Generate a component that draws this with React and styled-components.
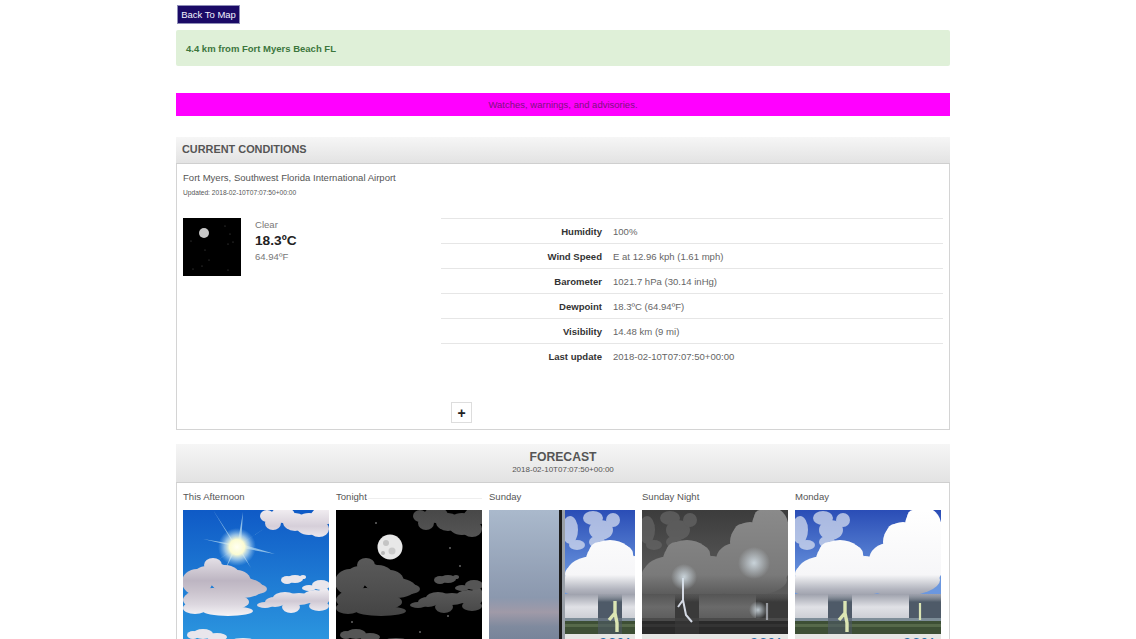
import React from "react";
import styled, { createGlobalStyle } from "styled-components";

const Global = createGlobalStyle`
  html, body { margin: 0; padding: 0; background: #fff; }
  body { font-family: "Liberation Sans", Arial, sans-serif; color: #666; }
  #root { height: 639px; overflow: hidden; }
`;

const Page = styled.div`
  width: 774px;
  margin-left: 176px;
  padding-top: 5px;
`;
const BackButton = styled.button`
  display: block;
  width: 63px;
  height: 19px;
  margin-left: 1px;
  padding: 0;
  background: #1a0a66;
  border: 1px solid #8f8fb8;
  color: #f2f2ff;
  font: 9.5px "Liberation Sans", Arial, sans-serif;
`;
const Alert = styled.div`
  display: flex;
  align-items: center;
  height: 36px;
  margin-top: 6px;
  padding-left: 10px;
  background: #dff0d8;
  border-radius: 2px;
  color: #3c763d;
  font-size: 9.5px;
  font-weight: bold;
`;
const Advisory = styled.div`
  display: flex;
  align-items: center;
  justify-content: center;
  height: 23px;
  margin-top: 27px;
  background: #ff00ff;
  color: #80107f;
  font-size: 9.5px;
`;
const Panel = styled.section`
  border: solid #d4d4d4;
  border-width: 0 1px 1px;
  margin-top: ${p => p.$top}px;
  box-sizing: border-box;
`;
const PanelHeader = styled.header`
  height: ${p => p.$h}px;
  margin: 0 -1px;
  background: linear-gradient(#f6f6f6, #e3e3e3);
  border-bottom: 1px solid #cfcfcf;
  box-sizing: border-box;
  color: #555;
  font-weight: bold;
`;
const CurrentTitle = styled(PanelHeader)`
  display: flex;
  align-items: center;
  padding: 0 0 2px 6px;
  font-size: 10.9px;
`;
const ForecastTitle = styled(PanelHeader)`
  display: flex;
  flex-direction: column;
  align-items: center;
  padding-top: 6px;
  font-size: 12.2px;
  line-height: 15px;
`;
const ForecastDate = styled.span`
  font-size: 8px;
  font-weight: normal;
  line-height: 9px;
  color: #555;
`;
const CurrentBody = styled.div`
  height: 265px;
  padding: 7px 5px 0 6px;
  box-sizing: border-box;
`;
const Station = styled.div`
  font-size: 9.55px;
  line-height: 13px;
  color: #555;
`;
const Updated = styled.div`
  margin-top: 4px;
  font-size: 6.65px;
  line-height: 9px;
  color: #555;
`;
const Conditions = styled.div`
  display: grid;
  grid-template-columns: 258px 502px;
  margin-top: 21px;
`;
const Now = styled.div`
  display: flex;
  gap: 14px;
`;
const NowText = styled.div`
  display: flex;
  flex-direction: column;
  font-size: 9.55px;
  line-height: 14px;
  color: #777;
`;
const Temp = styled.div`
  font-size: 13.7px;
  font-weight: bold;
  line-height: 18px;
  color: #222;
`;
const Row = styled.div`
  display: grid;
  grid-template-columns: 161px 1fr;
  column-gap: 11px;
  align-items: center;
  height: 25px;
  border-top: 1px solid #e6e6e6;
  box-sizing: border-box;
  font-size: 9.55px;
`;
const Label = styled.span`
  text-align: right;
  font-weight: bold;
  color: #333;
`;
const Value = styled.span`
  color: #666;
`;
const Toggle = styled.button`
  display: flex;
  align-items: center;
  justify-content: center;
  width: 21px;
  height: 21px;
  margin: 34px 0 0 10px;
  padding: 0;
  background: #fff;
  border: 1px solid #ddd;
  color: #222;
  font: bold 14px "Liberation Sans", Arial, sans-serif;
`;
const Days = styled.div`
  display: grid;
  grid-template-columns: repeat(5, 146px);
  column-gap: 7px;
  padding: 7px 0 0 6px;
`;
const Day = styled.div`
  display: flex;
  flex-direction: column;
  gap: 7px;
`;
const DayName = styled.div`
  display: flex;
  align-items: center;
  gap: 1px;
  height: 13px;
  font-size: 9.55px;
  color: #555;
`;
const Rule = styled.span`
  flex: 1;
  margin-top: 3px;
  border-top: 1px solid #eee;
`;
const Picture = styled.svg`
  display: block;
  width: 146px;
  height: 146px;
`;
const Thumb = styled.svg`
  display: block;
  width: 58px;
  height: 58px;
`;
const StripText = styled.text`
  fill: #2a6fa8;
  font: bold 17px "Liberation Sans", Arial, sans-serif;
`;

const Blobs = ({ parts, fill, opacity }) => (
  <g fill={fill} opacity={opacity}>
    {parts.map(([x, y, rx, ry], i) => <ellipse key={i} cx={x} cy={y} rx={rx} ry={ry} />)}
  </g>
);

const Fade = ({ id, y1, y2, stops }) => (
  <linearGradient id={id} gradientUnits="userSpaceOnUse" x1="0" y1={y1} x2="0" y2={y2}>
    {stops.map(([o, c, a]) => <stop key={o} offset={o} stopColor={c} stopOpacity={a ?? 1} />)}
  </linearGradient>
);

const topCloud = [[84, 6, 7, 6], [90, 13, 8, 7], [100, 5, 12, 8], [112, 12, 12, 9], [126, 14, 14, 11], [136, 19, 10, 8], [140, 6, 12, 9]];
const bigCloud = [[14, 72, 15, 13], [30, 55, 9, 7], [24, 66, 14, 10], [36, 62, 10, 8], [42, 68, 16, 13], [54, 72, 14, 12], [60, 78, 20, 10], [74, 79, 10, 5],
  [30, 90, 30, 12], [50, 92, 16, 7], [45, 101, 25, 5], [12, 98, 12, 6]];
const rightCloud = [[82, 95, 8, 3], [92, 92, 10, 5], [102, 88, 12, 6], [116, 89, 14, 6], [132, 87, 12, 7], [141, 86, 6, 9], [108, 97, 9, 6], [136, 96, 10, 5]];
const smallClouds = [[104, 70, 6, 4], [112, 69, 8, 4], [120, 67, 3, 2], [126, 78, 7, 3], [138, 75, 9, 5]];
const lowCloud = [[10, 125, 6, 4], [20, 124, 10, 5], [34, 127, 10, 4], [60, 130, 10, 2]];

const CloudLayer = ({ prefix, stops }) => (
  <>
    <defs>
      <Fade id={`${prefix}A`} y1="0" y2="27" stops={stops.top} />
      <Fade id={`${prefix}B`} y1="47" y2="106" stops={stops.big} />
      <Fade id={`${prefix}C`} y1="78" y2="104" stops={stops.right} />
    </defs>
    <Blobs parts={topCloud} fill={`url(#${prefix}A)`} />
    <Blobs parts={bigCloud} fill={`url(#${prefix}B)`} />
    <Blobs parts={rightCloud} fill={`url(#${prefix}C)`} />
    <Blobs parts={smallClouds} fill={stops.small} />
    <Blobs parts={lowCloud} fill={stops.small} />
  </>
);

const sunClouds = {
  top: [[0, "#f0ecf0"], [0.6, "#d6cfd9"], [1, "#ece8ee"]],
  big: [[0, "#e6e2e8"], [0.4, "#bdb5c2"], [0.6, "#cbc4ce"], [0.8, "#dcd7df"], [1, "#f5f3f6"]],
  right: [[0, "#f2f0f4"], [0.5, "#d0c9d4"], [1, "#f4f2f6"]],
  small: "#e9e6ec",
};
const moonClouds = {
  top: [[0, "#484848"], [1, "#555"]],
  big: [[0, "#5a5a5a"], [0.5, "#505050"], [1, "#444"]],
  right: [[0, "#5c5c5c"], [1, "#474747"]],
  small: "#555",
};

const rays = ["M54 37L30 0L50 33", "M54 37L60 2L58 34", "M54 37L82 18L58 34", "M54 37L92 44L58 34",
  "M54 37L20 29L50 34", "M54 37L26 56L50 40", "M54 37L68 58L58 40", "M54 37L42 60L50 40"];

const SunScene = () => (
  <Picture viewBox="0 0 146 146">
    <defs>
      <linearGradient id="sunSky" x1="0" y1="0" x2="0" y2="1">
        <stop offset="0" stopColor="#0f5ac6" />
        <stop offset="1" stopColor="#2f9de2" />
      </linearGradient>
      <radialGradient id="sunGlow">
        <stop offset="0" stopColor="#fffff2" />
        <stop offset="0.4" stopColor="#fbfbd2" />
        <stop offset="0.65" stopColor="#c9e4f0" stopOpacity="0.7" />
        <stop offset="1" stopColor="#8fc4ee" stopOpacity="0" />
      </radialGradient>
    </defs>
    <rect width="146" height="146" fill="url(#sunSky)" />
    <g fill="#a9d2ee" opacity="0.8">
      {rays.map(d => <path key={d} d={d} />)}
    </g>
    <circle cx="54" cy="37" r="19" fill="url(#sunGlow)" />
    <CloudLayer prefix="day" stops={sunClouds} />
  </Picture>
);

const stars = [[40, 13], [114, 38], [124, 56], [64, 66], [112, 106], [84, 122], [16, 112]];

const MoonScene = () => (
  <Picture viewBox="0 0 146 146">
    <rect width="146" height="146" fill="#000" />
    {stars.map(([x, y]) => <circle key={x} cx={x} cy={y} r="1" fill="#666" />)}
    <circle cx="54" cy="37" r="12.5" fill="#e8e8e8" />
    <circle cx="50" cy="33" r="3" fill="#c4c4c4" />
    <circle cx="56" cy="41" r="3.5" fill="#cacaca" />
    <circle cx="47" cy="43" r="2" fill="#b8b8b8" />
    <CloudLayer prefix="dark" stops={moonClouds} />
  </Picture>
);

const wisps = [[5, 20, 8, 14], [12, 35, 8, 5], [28, 8, 10, 7], [36, 20, 12, 10], [48, 10, 7, 7], [32, 32, 8, 6]];
const massParts = [[45, 50, 24, 20], [34, 42, 10, 10], [58, 44, 10, 9], [30, 62, 28, 16], [70, 60, 14, 14], [14, 64, 14, 10], [6, 72, 8, 8],
  [108, 32, 20, 20], [100, 22, 8, 8], [128, 15, 18, 18], [118, 8, 6, 8], [140, 36, 16, 26], [94, 50, 20, 17], [86, 58, 12, 10],
  [120, 55, 28, 26], [105, 70, 40, 16], [52, 72, 50, 14], [20, 78, 24, 8]];

const dayColors = {
  top: "#2a4db6", bot: "#6b97df", wisp: "#dfe5f2",
  cloud: [[0, "#ffffff"], [0.72, "#f6f6f8"], [0.88, "#b3b5bf"], [1, "#8f929e"]],
  band: [[0, "#9ea1ac"], [0.5, "#e0e1e6"], [1, "#c9ccd2"]],
  rain: "#4e5a68", horizon: "#7d8d98", ground: "#3d4f35", ground2: "#56694a", bolt: "#dbe5b4",
};
const nightColors = {
  top: "#3c3c3c", bot: "#5a5a5a", wisp: "#666",
  cloud: [[0, "#8a8a8a"], [0.72, "#7a7a7a"], [0.88, "#636363"], [1, "#555"]],
  band: [[0, "#555"], [0.5, "#6a6a6a"], [1, "#5c5c5c"]],
  rain: "#3a3a3a", horizon: "#4a4a4a", ground: "#2a2a2a", ground2: "#343434", bolt: "#d5dae4",
};

const Storm = ({ id, night }) => {
  const c = night ? nightColors : dayColors;
  return (
    <>
      <defs>
        <Fade id={`${id}Sky`} y1="0" y2="70" stops={[[0, c.top], [1, c.bot]]} />
        <Fade id={`${id}Cloud`} y1="0" y2="90" stops={c.cloud} />
        <Fade id={`${id}Band`} y1="84" y2="110" stops={c.band} />
        <Fade id={`${id}Rain`} y1="84" y2="92" stops={[[0, c.rain, 0], [1, c.rain, 1]]} />
      </defs>
      <rect width="146" height="90" fill={`url(#${id}Sky)`} />
      <Blobs parts={wisps} fill={c.wisp} opacity="0.7" />
      <Blobs parts={massParts} fill={`url(#${id}Cloud)`} />
      <rect y="84" width="146" height="26" fill={`url(#${id}Band)`} />
      <rect x="33" y="84" width="24" height="40" fill={`url(#${id}Rain)`} />
      <rect x="114" y="84" width="32" height="26" fill={`url(#${id}Rain)`} />
      <rect y="108" width="146" height="4" fill={c.horizon} />
      <rect y="111" width="146" height="13" fill={c.ground} />
      <rect y="114" width="146" height="3" fill={c.ground2} />
      <rect x="33" y="108" width="24" height="16" fill={c.rain} opacity="0.6" />
      <path
        d={night ? "M41 68L41 90L36 97M41 90L44 105L50 112" : "M50 91L50 103L44 110M50 103L52 113L52 122"}
        fill="none"
        stroke={c.bolt}
        strokeWidth={night ? 2 : 3.4}
      />
      <path d="M125 93L125 110" fill="none" stroke={c.bolt} strokeWidth="2.2" opacity={night ? 0.6 : 1} />
    </>
  );
};

const Strip = ({ x }) => (
  <>
    <rect y="124" width="146" height="22" fill="#e6e6e4" />
    <StripText x={x} y="140">60%</StripText>
  </>
);

const StormPicture = ({ id, night }) => (
  <Picture viewBox="0 0 146 146">
    {night && (
      <defs>
        <radialGradient id="flash">
          <stop offset="0" stopColor="#d6e2ea" stopOpacity="0.85" />
          <stop offset="1" stopColor="#d6e2ea" stopOpacity="0" />
        </radialGradient>
      </defs>
    )}
    <Storm id={id} night={night} />
    {night && (
      <>
        <circle cx="112" cy="53" r="16" fill="url(#flash)" />
        <circle cx="42" cy="67" r="13" fill="url(#flash)" />
        <circle cx="116" cy="100" r="9" fill="url(#flash)" />
      </>
    )}
    <Strip x="107" />
  </Picture>
);

const SplitPicture = () => (
  <Picture viewBox="0 0 146 146">
    <defs>
      <linearGradient id="pane" x1="0" y1="0" x2="0" y2="1">
        <stop offset="0" stopColor="#aab9cc" />
        <stop offset="0.6" stopColor="#8b98ae" />
        <stop offset="0.7" stopColor="#a09aa8" />
        <stop offset="0.8" stopColor="#7f8a9e" />
        <stop offset="1" stopColor="#6f7c94" />
      </linearGradient>
    </defs>
    <rect width="70" height="146" fill="url(#pane)" />
    <rect x="70" width="3" height="146" fill="#1c1c1c" />
    <rect x="73" width="3" height="146" fill="#9aa0a8" />
    <svg x="76" width="70" height="146" viewBox="0 0 70 146">
      <Storm id="split" />
      <Strip x="33" />
    </svg>
  </Picture>
);

const rows = [
  ["Humidity", "100%"],
  ["Wind Speed", "E at 12.96 kph (1.61 mph)"],
  ["Barometer", "1021.7 hPa (30.14 inHg)"],
  ["Dewpoint", "18.3ºC (64.94ºF)"],
  ["Visibility", "14.48 km (9 mi)"],
  ["Last update", "2018-02-10T07:07:50+00:00"],
];

const thumbStars = [[42, 8], [47, 16], [45, 26], [50, 24], [8, 23], [22, 32], [26, 42], [19, 48], [45, 52], [10, 51]];

export default function App() {
  return (
    <Page>
      <Global />
      <BackButton>Back To Map</BackButton>
      <Alert>4.4 km from Fort Myers Beach FL</Alert>
      <Advisory>Watches, warnings, and advisories.</Advisory>
      <Panel $top={21}>
        <CurrentTitle as="header" $h={27}>CURRENT CONDITIONS</CurrentTitle>
        <CurrentBody>
          <Station>Fort Myers, Southwest Florida International Airport</Station>
          <Updated>Updated: 2018-02-10T07:07:50+00:00</Updated>
          <Conditions>
            <Now>
              <Thumb viewBox="0 0 58 58">
                <rect width="58" height="58" fill="#000" />
                <circle cx="21" cy="15" r="5" fill="#c9c9c9" />
                {thumbStars.map(([x, y]) => <circle key={`${x}-${y}`} cx={x} cy={y} r="0.6" fill="#555" />)}
              </Thumb>
              <NowText>
                <span>Clear</span>
                <Temp>18.3ºC</Temp>
                <span>64.94ºF</span>
              </NowText>
            </Now>
            <div>
              {rows.map(([k, v]) => (
                <Row key={k}><Label>{k}</Label><Value>{v}</Value></Row>
              ))}
              <Toggle>+</Toggle>
            </div>
          </Conditions>
        </CurrentBody>
      </Panel>
      <Panel $top={14}>
        <ForecastTitle as="header" $h={39}>
          FORECAST
          <ForecastDate>2018-02-10T07:07:50+00:00</ForecastDate>
        </ForecastTitle>
        <Days>
          <Day><DayName>This Afternoon</DayName><SunScene /></Day>
          <Day><DayName>Tonight<Rule /></DayName><MoonScene /></Day>
          <Day><DayName>Sunday</DayName><SplitPicture /></Day>
          <Day><DayName>Sunday Night</DayName><StormPicture id="night" night /></Day>
          <Day><DayName>Monday</DayName><StormPicture id="mon" /></Day>
        </Days>
      </Panel>
    </Page>
  );
}
